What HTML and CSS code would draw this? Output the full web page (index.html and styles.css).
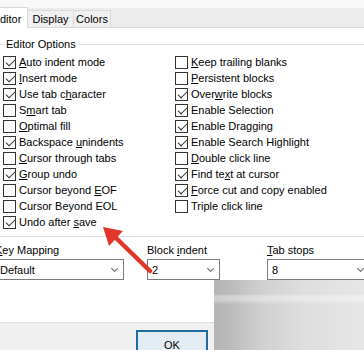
FILE: index.html
```html
<html>
<head>
  <title>Editor Options</title>
  <link rel="stylesheet" href="styles.css">
</head>
<body>
  <div class="dialog">
    <div class="tabstrip">
      <div class="tab active">Editor</div>
      <div class="tab display">Display</div>
      <div class="tab colors">Colors</div>
    </div>

    <div class="page">
      <fieldset class="group">
        <legend>Editor Options</legend>
        <div class="options">
          <label class="opt on"><span class="box"></span><span><u>A</u>uto indent mode</span></label>
          <label class="opt on"><span class="box"></span><span><u>I</u>nsert mode</span></label>
          <label class="opt on"><span class="box"></span><span>Use tab c<u>h</u>aracter</span></label>
          <label class="opt"><span class="box"></span><span>S<u>m</u>art tab</span></label>
          <label class="opt"><span class="box"></span><span><u>O</u>ptimal fill</span></label>
          <label class="opt on"><span class="box"></span><span>Backspace <u>u</u>nindents</span></label>
          <label class="opt"><span class="box"></span><span><u>C</u>ursor through tabs</span></label>
          <label class="opt on"><span class="box"></span><span><u>G</u>roup undo</span></label>
          <label class="opt"><span class="box"></span><span>Cursor beyond <u>E</u>OF</span></label>
          <label class="opt"><span class="box"></span><span>Cursor Beyond EOL</span></label>
          <label class="opt on"><span class="box"></span><span>Undo after <u>s</u>ave</span></label>

          <label class="opt"><span class="box"></span><span><u>K</u>eep trailing blanks</span></label>
          <label class="opt"><span class="box"></span><span><u>P</u>ersistent blocks</span></label>
          <label class="opt on"><span class="box"></span><span>Over<u>w</u>rite blocks</span></label>
          <label class="opt on"><span class="box"></span><span>Enable Selection</span></label>
          <label class="opt on"><span class="box"></span><span>Enable Dragging</span></label>
          <label class="opt on"><span class="box"></span><span>Enable Search Highlight</span></label>
          <label class="opt"><span class="box"></span><span><u>D</u>ouble click line</span></label>
          <label class="opt on"><span class="box"></span><span>Find te<u>x</u>t at cursor</span></label>
          <label class="opt on"><span class="box"></span><span><u>F</u>orce cut and copy enabled</span></label>
          <label class="opt"><span class="box"></span><span>Triple click line</span></label>
        </div>
      </fieldset>

      <div class="fields">
        <div class="field">
          <div class="caption"><u>K</u>ey Mapping</div>
          <div class="select wide"><span>Default</span><span class="chev"></span></div>
        </div>
        <div class="field">
          <div class="caption">Block <u>i</u>ndent</div>
          <div class="select narrow"><span>2</span><span class="chev"></span></div>
        </div>
        <div class="field">
          <div class="caption"><u>T</u>ab stops</div>
          <div class="select last"><span>8</span><span class="chev"></span></div>
        </div>
      </div>
    </div>

    <div class="footer">
      <button class="ok">OK</button>
    </div>
  </div>

  <!-- annotation arrow drawn over the dialog -->
  <svg class="arrow" width="364" height="350" viewBox="0 0 364 350">
    <line x1="115" y1="237" x2="150" y2="271" stroke="#e3362b" stroke-width="4.5" stroke-linecap="round"/>
    <polygon points="103,227 123,231 109,246" fill="#e3362b"/>
  </svg>

  <div class="blur"></div>
</body>
</html>
```

FILE: styles.css
```css
* { box-sizing: border-box; }

html, body { margin: 0; }

body
{
  width: 364px;
  height: 350px;
  overflow: hidden;
  position: relative;
  background: #f0f0f0;
  font: 11px "Liberation Sans", Arial, sans-serif;
  color: #000;
}

u { text-underline-offset: 1px; }

.dialog { margin-left: -14px; width: 420px; }

/* tab header */
.tabstrip
{
  height: 27px;
  display: flex;
  align-items: flex-end;
  background: linear-gradient(#f8f8f8 0 8px, #ececec 8px);
}
.tab
{
  height: 17px;
  line-height: 16px;
  border: 1px solid #d9d9d9;
  border-bottom: none;
  background: #f0f0f0;
  text-align: center;
  margin-left: -1px;
}
.tab.active
{
  position: relative;
  z-index: 1;
  width: 42px;
  height: 21px;
  padding-top: 3px;
  margin: 0 0 -1px 0;
  background: #fff;
}
.tab.display { width: 47px; }
.tab.colors  { width: 38px; }

/* tab page */
.page
{
  height: 296px;
  background: #fff;
  border-top: 1px solid #d9d9d9;
  border-bottom: 1px solid #dcdcdc;
  padding: 10px 0 0 10px;
}

.group
{
  margin: 0;
  min-width: 0;
  width: 430px;
  padding: 3px 0 6px 6px;
  border: 1px solid #dcdcdc;
}
.group legend
{
  margin-left: 1px;
  padding: 0 2px;
  line-height: 13px;
}

.options
{
  display: grid;
  grid-auto-flow: column;
  grid-template-rows: repeat(11, 16px);
  grid-template-columns: 172px auto;
}
.opt
{
  display: flex;
  align-items: center;
  white-space: nowrap;
}
.box
{
  flex: none;
  position: relative;
  width: 13px;
  height: 13px;
  margin-right: 3px;
  border: 1px solid #333;
  background: #fff;
}
.opt.on .box::after
{
  content: "";
  position: absolute;
  left: 1.5px;
  top: 2px;
  width: 8px;
  height: 4px;
  border-left: 1.2px solid #333;
  border-bottom: 1.2px solid #333;
  transform: rotate(-45deg);
}

/* bottom drop-downs */
.fields
{
  display: grid;
  grid-template-columns: 152px 120px 1fr;
  margin: 6px 0 0 -1px;
}
.caption { line-height: 14px; white-space: nowrap; }
.select
{
  height: 21px;
  margin-top: 2px;
  display: flex;
  align-items: center;
  justify-content: space-between;
  padding: 0 6px 0 4px;
  border: 1px solid #7a7a7a;
  background: #fff;
}
.select.wide   { width: 129px; }
.select.narrow { width: 73px; }
.select.last   { width: 103px; }
.chev
{
  width: 5px;
  height: 5px;
  margin-top: -3px;
  border-right: 1px solid #666;
  border-bottom: 1px solid #666;
  transform: rotate(45deg);
}

/* buttons */
.footer { padding: 7px 0 0 150px; }
.ok
{
  width: 72px;
  height: 30px;
  padding: 0;
  border: 2px solid #1f6d9e;
  background: #e3ecf3;
  font: inherit;
  color: #000;
}

/* overlays */
.arrow
{
  position: absolute;
  left: 0;
  top: 0;
  pointer-events: none;
}
.blur
{
  position: absolute;
  left: 214px;
  top: 280px;
  width: 150px;
  height: 70px;
  background:
    linear-gradient(180deg, rgba(255,255,255,0) 0 14px, rgba(255,255,255,.35) 16px 20px, rgba(255,255,255,0) 24px),
    linear-gradient(90deg, #b4b4b4 0, #bdbdbd 20px, #cfcfcf 45px, #dedede 90px, #e6e6e6 150px);
}
```
